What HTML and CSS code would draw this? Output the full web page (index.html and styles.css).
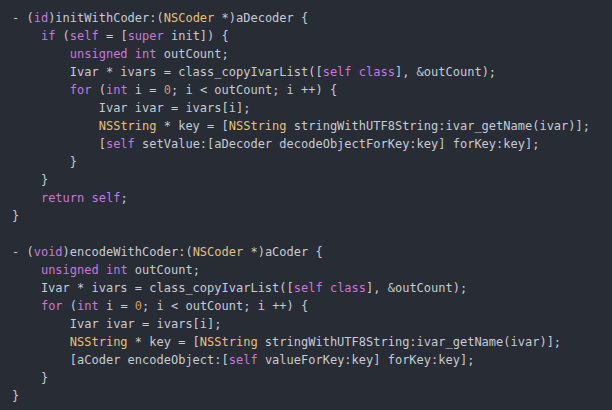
FILE: index.html
```html
<!DOCTYPE html>
<html>
<head>
<meta charset="utf-8">
<link rel="stylesheet" href="styles.css">
</head>
<body>
<pre class="code"><code>- (<span class="kw">id</span>)initWithCoder:(<span class="ty">NSCoder</span> *)aDecoder {
    <span class="kw">if</span> (<span class="kw">self</span> = [<span class="kw">super</span> init]) {
        <span class="kw">unsigned</span> <span class="kw">int</span> outCount;
        Ivar * ivars = class_copyIvarList([<span class="kw">self</span> <span class="kw">class</span>], &amp;outCount);
        <span class="kw">for</span> (<span class="kw">int</span> i = <span class="nu">0</span>; i &lt; outCount; i ++) {
            Ivar ivar = ivars[i];
            <span class="ty">NSString</span> * key = [<span class="ty">NSString</span> stringWithUTF8String:ivar_getName(ivar)];
            [<span class="kw">self</span> setValue:[aDecoder decodeObjectForKey:key] forKey:key];
        }
    }
    <span class="kw">return</span> <span class="kw">self</span>;
}

- (<span class="kw">void</span>)encodeWithCoder:(<span class="ty">NSCoder</span> *)aCoder {
    <span class="kw">unsigned</span> <span class="kw">int</span> outCount;
    Ivar * ivars = class_copyIvarList([<span class="kw">self</span> <span class="kw">class</span>], &amp;outCount);
    <span class="kw">for</span> (<span class="kw">int</span> i = <span class="nu">0</span>; i &lt; outCount; i ++) {
        Ivar ivar = ivars[i];
        <span class="ty">NSString</span> * key = [<span class="ty">NSString</span> stringWithUTF8String:ivar_getName(ivar)];
        [aCoder encodeObject:[<span class="kw">self</span> valueForKey:key] forKey:key];
    }
}</code></pre>
</body>
</html>
```
FILE: styles.css
```css
html, body {
  margin: 0;
  padding: 0;
  background: #282c34;
  height: 100%;
}
.code {
  margin: 0;
  padding: 9px 0 0 12px;
  font-family: "DejaVu Sans Mono", monospace;
  font-size: 12px;
  line-height: 18px;
  color: #c6cbd4;
  white-space: pre;
}
.kw { color: #c678dd; }
.ty { color: #e5c07b; }
.nu { color: #d19a66; }
```
